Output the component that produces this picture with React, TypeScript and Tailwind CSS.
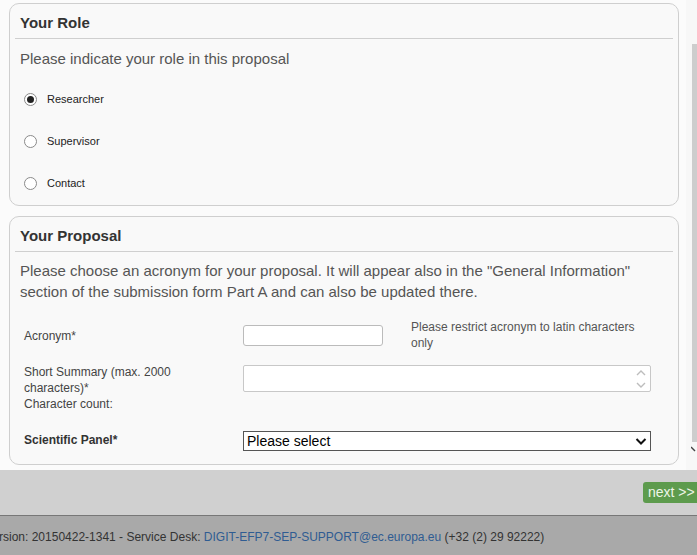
import React from "react";

function Radio({ checked, label }: { checked?: boolean; label: string }) {
  return (
    <div className="h-[42px] flex items-center pl-[9px]">
      <span className="w-[13px] h-[13px] rounded-full border border-[#8a8a8a] bg-white flex items-center justify-center">
        {checked && <span className="w-[7px] h-[7px] rounded-full bg-[#222]" />}
      </span>
      <span className="ml-[10px] text-[11px] text-[#222] leading-[14px]">{label}</span>
    </div>
  );
}

function PanelHeader({ title }: { title: string }) {
  return (
    <div className="h-[35px] border-b border-[#cfcfcf] pl-[5px] pt-[10px]">
      <div className="text-[15px] leading-[18px] font-bold text-[#333]">{title}</div>
    </div>
  );
}

export default function App() {
  return (
    <div
      className="w-[697px] h-[555px] overflow-hidden flex flex-col bg-[#fbfbfb]"
      style={{ fontFamily: '"Liberation Sans", Arial, sans-serif' }}
    >
      <div className="h-[470px] flex bg-[#fbfbfb]">
        <div className="w-[686px] pl-[9px] pt-[3px] flex flex-col gap-[10px]">
          {/* Your Role */}
          <div className="w-[670px] h-[203px] rounded-[10px] border border-[#cfcfcf] bg-[#f9f9f9] px-[5px]">
            <PanelHeader title="Your Role" />
            <div className="pl-[5px] mt-[9px] text-[15px] leading-[21px] text-[#555]">
              Please indicate your role in this proposal
            </div>
            <div className="mt-[9px]">
              <Radio checked label="Researcher" />
              <Radio label="Supervisor" />
              <Radio label="Contact" />
            </div>
          </div>

          {/* Your Proposal */}
          <div className="w-[670px] h-[249px] rounded-[10px] border border-[#cfcfcf] bg-[#f9f9f9] px-[5px]">
            <PanelHeader title="Your Proposal" />
            <div className="pl-[5px] mt-[8px] w-[645px] text-[15px] leading-[21px] text-[#555]">
              Please choose an acronym for your proposal. It will appear also in the "General Information" section of the submission form Part A and can also be updated there.
            </div>
            <div className="pl-[9px] mt-[17px] text-[12px] leading-[16px] text-[#444]">
              {/* Acronym row */}
              <div className="flex h-[45px]">
                <div className="w-[219px] pt-[9px]">Acronym*</div>
                <div className="pt-[6px]">
                  <div className="w-[140px] h-[21px] rounded-[3px] border border-[#bbb] bg-white" />
                </div>
                <div className="ml-[28px] w-[236px] text-[#555]">
                  Please restrict acronym to latin characters only
                </div>
              </div>
              {/* Summary row */}
              <div className="flex h-[67px]">
                <div className="w-[219px]">
                  <div className="w-[165px]">Short Summary (max. 2000 characters)*</div>
                  <div>Character count:</div>
                </div>
                <div className="pt-[1px]">
                  <div className="w-[408px] h-[27px] rounded-[2px] border border-[#c8c8c8] bg-white flex justify-end pr-[3px]">
                    <svg width="12" height="25" viewBox="0 0 12 25" className="mt-[1px]">
                      <path d="M2 8 L6 4 L10 8" fill="none" stroke="#bdbdbd" strokeWidth="1.4" />
                      <path d="M2 16 L6 20 L10 16" fill="none" stroke="#bdbdbd" strokeWidth="1.4" />
                    </svg>
                  </div>
                </div>
              </div>
              {/* Scientific Panel row */}
              <div className="flex">
                <div className="w-[219px] pt-[1px] font-bold text-[#333]">Scientific Panel*</div>
                <div className="w-[408px] h-[20px] border border-[#555] bg-white flex items-center justify-between pl-[3px] pr-[3px]">
                  <span className="text-[14px] leading-[16px] text-[#000]">Please select</span>
                  <svg width="12" height="10" viewBox="0 0 12 10">
                    <path d="M1.5 3 L6 7.5 L10.5 3" fill="none" stroke="#111" strokeWidth="2" />
                  </svg>
                </div>
              </div>
            </div>
          </div>
        </div>
        {/* scrollbar */}
        <div className="w-[11px] bg-[#f7f7f7] flex flex-col pl-[6px]">
          <div className="mt-[44px] h-[398px] w-[5px] bg-[#cdcdcd]" />
          <svg width="5" height="8" viewBox="0 0 5 8" className="mt-[3px] -ml-[1px]">
            <path d="M0 2 L4 6" stroke="#444" strokeWidth="1.5" />
          </svg>
        </div>
      </div>

      {/* action bar */}
      <div className="h-[45px] bg-[#d0d0d0] flex justify-end items-start pt-[12px]">
        <div className="h-[21px] w-[56px] -mr-[2px] rounded-[3px] bg-[#5d9b4d] text-[#eef5e8] text-[14px] leading-[21px] pl-[5px] whitespace-nowrap">
          next &gt;&gt;
        </div>
      </div>

      {/* footer */}
      <div className="flex-1 bg-[#a9a9a9] border-t border-[#777] overflow-hidden">
        <div className="mt-[13px] -ml-[15px] whitespace-nowrap text-[12px] leading-[16px] text-[#333]">
          Version: 20150422-1341 - Service Desk:{" "}
          <span className="text-[#2f5c92]">DIGIT-EFP7-SEP-SUPPORT@ec.europa.eu</span> (+32 (2) 29 92222)
        </div>
      </div>
    </div>
  );
}
